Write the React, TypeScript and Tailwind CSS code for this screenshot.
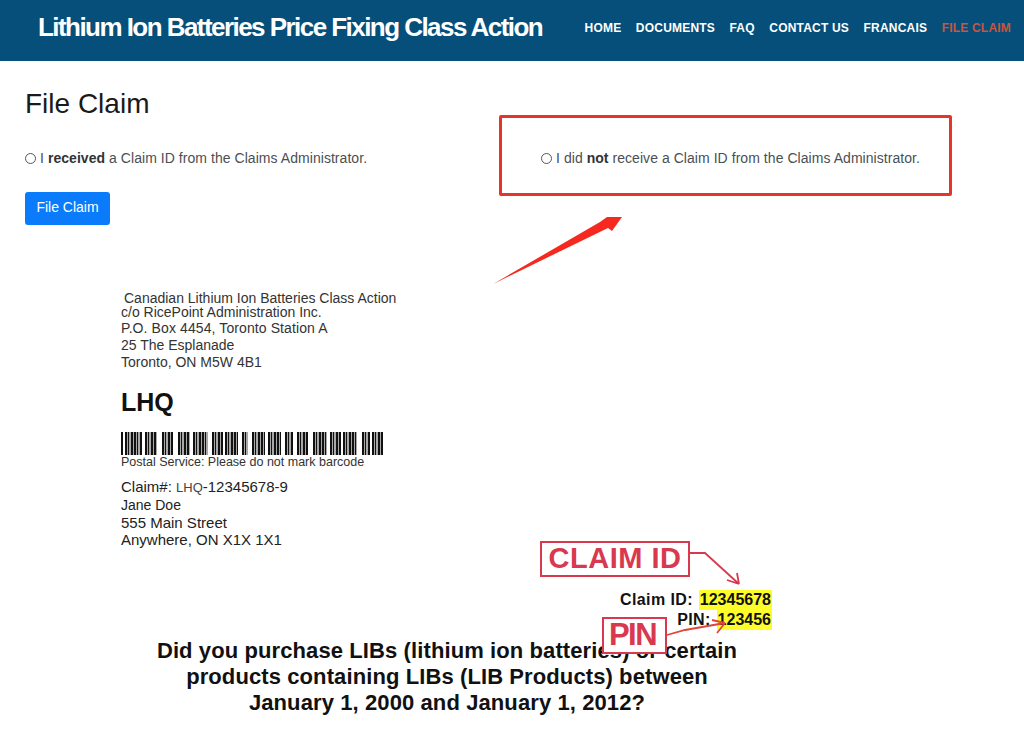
const navItems = ["HOME", "DOCUMENTS", "FAQ", "CONTACT US", "FRANCAIS"];

// dark groups of the postal barcode, [from, to] in px from its left edge
const barGroups: [number, number][] = [
  [0, 1], [4, 21], [24, 36], [41, 52], [57, 69], [72, 87], [91, 101], [104, 117], [121, 127],
  [131, 144], [147, 160], [164, 172], [176, 187], [192, 206], [209, 219], [222, 236], [241, 248], [251, 262],
];

function Barcode() {
  return (
    <svg width="262" height="23" viewBox="0 0 262 23" className="block">
      {barGroups.map(([from, to]) => (
        <g key={from}>
          <rect x={from} y="0" width={to - from} height="23" fill="#a8a8a8" />
          {Array.from({ length: Math.ceil((to - from) / 3) }, (_, i) => (
            <rect key={i} x={from + i * 3} y="0" width={i % 3 === 1 ? 1 : 2} height="23" fill="#111" />
          ))}
        </g>
      ))}
    </svg>
  );
}

function Annotations() {
  return (
    <svg width="1024" height="733" viewBox="0 0 1024 733" className="absolute left-0 top-0 pointer-events-none">
      {/* big red arrow */}
      <polygon points="493,284 600,222 607,217 622,217 612,231 608,228" fill="#f5291f" />
      {/* claim id arrow */}
      <path d="M690 553 L705 553 L739 584 M739 584 L737 573 M739 584 L727 580" fill="none" stroke="#d9394f" strokeWidth="1.8" />
      {/* pin arrow */}
      <path d="M667 635 L685 630 L725 623 M725 623 L712 620 M725 623 L717 633" fill="none" stroke="#e0443c" strokeWidth="1.8" />
    </svg>
  );
}

export default function App() {
  return (
    <div className="relative w-[1024px] h-[733px] overflow-hidden bg-white font-['Liberation_Sans',Arial,sans-serif] text-[#212529]">
      <header className="flex h-[61px] items-center justify-between bg-[#054f7a] pb-[6px] pl-[38px] pr-[13px]">
        <div className="text-[26px] font-bold tracking-[-1.55px] text-white">Lithium Ion Batteries Price Fixing Class Action</div>
        <nav className="flex items-center gap-[14.5px] text-[12px] font-bold tracking-[0.2px] text-white">
          {navItems.map((item) => (
            <a key={item}>{item}</a>
          ))}
          <a className="text-[#c5563f]">FILE CLAIM</a>
        </nav>
      </header>

      <main className="pl-[25px]">
        <h1 className="mt-[26px] text-[28px] leading-[34px] text-[#1a1a1a]">File Claim</h1>

        <div className="mt-[17px] flex h-[80px] items-start">
          <label className="flex w-[474px] items-center pt-[10px] text-[14px] leading-[21px] tracking-[0.05px] text-[#4a4f54]">
            <span className="mr-[4px] h-[11px] w-[11px] rounded-full border border-[#555]" />
            <span>
              I <b className="text-[#333]">received</b> a Claim ID from the Claims Administrator.
            </span>
          </label>
          <div className="-mt-[23px] flex h-[81px] w-[453px] items-center rounded-[2px] border-[3px] border-[#e5352b] pl-[39px] pt-[5px]">
            <label className="flex items-center text-[14px] leading-[21px] tracking-[0.05px] text-[#4a4f54]">
              <span className="mr-[4px] h-[11px] w-[11px] rounded-full border border-[#555]" />
              <span>
                I did <b className="text-[#333]">not</b> receive a Claim ID from the Claims Administrator.
              </span>
            </label>
          </div>
        </div>

        <button className="-mt-[26px] block h-[33px] w-[85px] rounded-[3px] bg-[#0a7bfa] pb-[2px] text-[14px] text-white">File Claim</button>

        <section className="ml-[96px] mt-[66px] text-[#333]">
          <div className="pl-[3px] text-[14px] leading-[15px]">Canadian Lithium Ion Batteries Class Action</div>
          <div className="text-[14px] leading-[17px]">
            <div className="leading-[13px]">c/o RicePoint Administration Inc.</div>
            <div className="mt-[1px] tracking-[0.1px]">P.O. Box 4454, Toronto Station A</div>
            <div>25 The Esplanade</div>
            <div>Toronto, ON M5W 4B1</div>
          </div>
          <div className="mt-[17px] text-[25px] font-bold leading-[29px] text-[#111]">LHQ</div>
          <div className="mt-[15px]">
            <Barcode />
          </div>
          <div className="text-[12.5px] leading-[14px] text-[#333]">Postal Service: Please do not mark barcode</div>
          <div className="mt-[9px] text-[15px] leading-[17px] text-[#222]">
            <div>
              <span>Claim#:</span> <span className="text-[13px] text-[#444]">LHQ</span>-12345678-9
            </div>
            <div className="mt-[1px] text-[14px]">Jane Doe</div>
            <div>555 Main Street</div>
            <div>Anywhere, ON X1X 1X1</div>
          </div>
        </section>
      </main>

      <div className="absolute left-[540px] top-[541px] flex h-[36px] w-[150px] items-center justify-center border-2 border-[#d9394f] bg-white text-[29px] font-bold tracking-[0.5px] text-[#d9394f]">CLAIM ID</div>

      <div className="absolute right-[252px] top-[590px] flex flex-col items-end text-[16px] font-bold leading-[20px] text-[#111]">
        <div className="tracking-[0.4px]">
          Claim ID: <span className="ml-[1px] inline-block bg-[#fdfd2a] px-[1px] tracking-normal">12345678</span>
        </div>
        <div className="tracking-[0.4px]">
          PIN: <span className="ml-[1px] inline-block bg-[#fdfd2a] px-[1px] tracking-normal">123456</span>
        </div>
      </div>

      <div className="absolute left-[0px] top-[638px] w-[894px] text-center text-[22px] font-bold leading-[26px] tracking-[0.1px] text-[#111]">
        Did you purchase LIBs (lithium ion batteries) or certain
        <br />
        products containing LIBs (LIB Products) between
        <br />
        January 1, 2000 and January 1, 2012?
      </div>

      <div className="absolute left-[602px] top-[617px] flex h-[37px] w-[65px] items-center justify-center border-2 border-[#d9394f] bg-white pr-[4px] text-[31px] font-bold tracking-[-1.5px] text-[#d9394f]">PIN</div>

      <Annotations />
    </div>
  );
}
